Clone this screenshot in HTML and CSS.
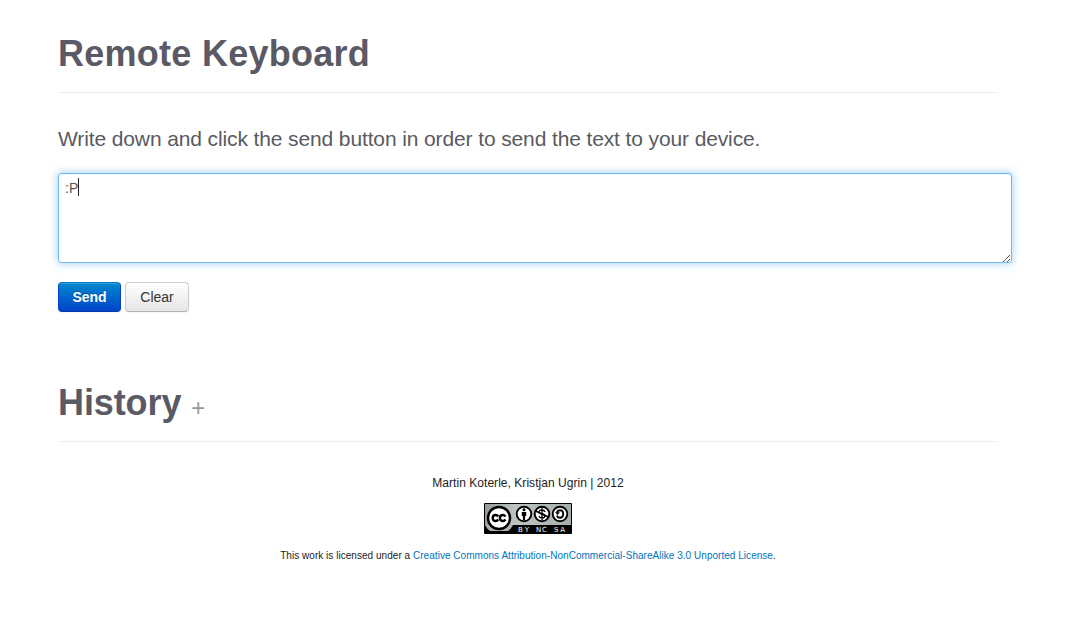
FILE: index.html
```
<!DOCTYPE html>
<html lang="en">
<head>
<meta charset="utf-8">
<title>Remote Keyboard</title>
<link rel="stylesheet" href="styles.css">
</head>
<body>
<main class="container">
  <header class="page-header"><h1 class="title">Remote Keyboard</h1></header>
  <p class="lead">Write down and click the send button in order to send the text to your device.</p>
  <div class="editor" role="textbox">
    <span class="editor-text">:P</span><span class="caret"></span>
    <svg class="grip" width="8" height="8" viewBox="0 0 8 8" shape-rendering="crispEdges"><path d="M0 7.5h1m0-1h1m0-1h1m0-1h1m0-1h1m0-1h1m0-1h1M4 7.5h1m0-1h1m0-1h1" stroke="#555" fill="none"/></svg>
  </div>
  <div class="actions">
    <button class="btn btn-primary">Send</button>
    <button class="btn">Clear</button>
  </div>
  <section class="page-header history"><h2 class="title title-history">History</h2><span class="plus">+</span></section>
  <footer class="footer">
    <p class="authors">Martin Koterle, Kristjan Ugrin | 2012</p>
    <svg class="badge" width="88" height="31" viewBox="0 0 88 31">
      <defs><linearGradient id="bg"><stop offset="0" stop-color="#929b96"/><stop offset=".35" stop-color="#bdc4bf"/><stop offset="1" stop-color="#a5afa9"/></linearGradient></defs>
      <rect width="88" height="31" rx="1"/>
      <rect x="1" y="1" width="86" height="21" fill="url(#bg)"/>
      <path d="M1 22h28q-2 4-5 6H6q-3-2-5-6z" fill="#aab2ad"/>
      <circle cx="15" cy="15" r="11" fill="#fff" stroke="#000" stroke-width="2.4"/>
      <g fill="none" stroke="#000" stroke-width="2.300">
        <path d="M14.300 13.500q-1-1.500-2.600-1.500c-4 0-4 6 0 6q1.600 0 2.600-1.500M21.500 13.500q-1-1.500-2.600-1.500c-4 0-4 6 0 6q1.600 0 2.600-1.500"/>
      </g>
      <g fill="#fff" stroke="#000" stroke-width="1.900"><circle cx="40" cy="11" r="7.300"/><circle cx="58" cy="11" r="7.300"/><circle cx="76" cy="11" r="7.300"/></g>
      <circle cx="40" cy="6.800" r="1.500"/><path d="M37.800 9h4.400v4h-1.100v4h-2.200v-4h-1.100z"/>
      <path d="M61 9q-.7-2-3-2c-4 0-3.700 3.500 0 4s3.700 4 0 4q-2.500 0-3-2M58 5v12" fill="none" stroke="#000" stroke-width="1.300"/>
      <path d="M51.500 8l13 6" stroke="#000" stroke-width="1.700"/>
      <path d="M73 9.500q.5-2.300 3-2.300c4.300 0 4.300 7.600 0 7.600q-2.500 0-3-2.300" fill="none" stroke="#000" stroke-width="1.900"/><path d="M71 9.200h5l-2.500 2.800z"/>
      <g class="badge-text"><text x="34" y="29" textLength="11">BY</text><text x="52" y="29" textLength="11">NC</text><text x="70" y="29" textLength="11">SA</text></g>
    </svg>
    <p class="license"><span class="license-intro">This work is licensed under a</span> <a class="license-link" href="#">Creative Commons Attribution-NonCommercial-ShareAlike 3.0 Unported License</a>.</p>
  </footer>
</main>
</body>
</html>
```
FILE: styles.css
```
* { box-sizing: border-box; }
body { margin: 0; background: #fff; color: #333; font-family: "Liberation Sans", Arial, sans-serif; font-size: 14px; line-height: 20px; }
h1, h2, p { margin: 0; }
.container { width: 940px; margin-left: 58px; padding-top: 33px; }
.page-header { height: 60px; border-bottom: 1px solid #eee; color: #5a5a66; }
.title { padding-top: 1px; font-size: 36px; line-height: 40px; font-weight: bold; letter-spacing: .27px; white-space: nowrap; }
.title-history { letter-spacing: -.1px; }
.lead { margin-top: 31px; height: 30px; color: #5a5a5f; font-size: 21px; line-height: 30px; letter-spacing: -.12px; white-space: nowrap; }
.editor { position: relative; display: flex; width: 954px; height: 90px; margin-top: 19px; padding: 4px 6px; border: 1px solid #74b9ef; border-radius: 3px; color: #555; box-shadow: inset 0 1px 1px rgba(0,0,0,.05), 0 0 8px rgba(82,168,236,.6); }
.caret { width: 1px; height: 18px; background: #222; }
.grip { position: absolute; right: 0; bottom: 0; }
.actions { display: flex; gap: 4px; margin-top: 19px; }
.btn { width: 64px; height: 30px; padding: 0; border: 1px solid #ccc; border-bottom-color: #b3b3b3; border-radius: 4px; background: linear-gradient(#fff, #e6e6e6); color: #333; font: 14px/20px "Liberation Sans", Arial, sans-serif; box-shadow: inset 0 1px 0 rgba(255,255,255,.2), 0 1px 2px rgba(0,0,0,.05); }
.btn-primary { width: 63px; border-color: #0077c0 #04c #003aad; background: linear-gradient(#08c, #04c); color: #fff; font-weight: bold; text-shadow: 0 -1px 0 rgba(0,0,0,.25); }
.history { display: flex; margin-top: 70px; }
.plus { margin: 6px 0 0 10px; color: #999; font-size: 24px; line-height: 40px; }
.footer { display: flex; flex-direction: column; align-items: center; color: #222; }
.authors { margin-top: 31px; font-size: 12px; letter-spacing: .04px; }
.badge { margin-top: 10px; }
.badge-text { fill: #fff; font: 7px "DejaVu Sans", sans-serif; }
.license { margin-top: 12px; font-size: 10px; letter-spacing: .035px; white-space: nowrap; }
.license-link { color: #0074be; text-decoration: none; }
```
